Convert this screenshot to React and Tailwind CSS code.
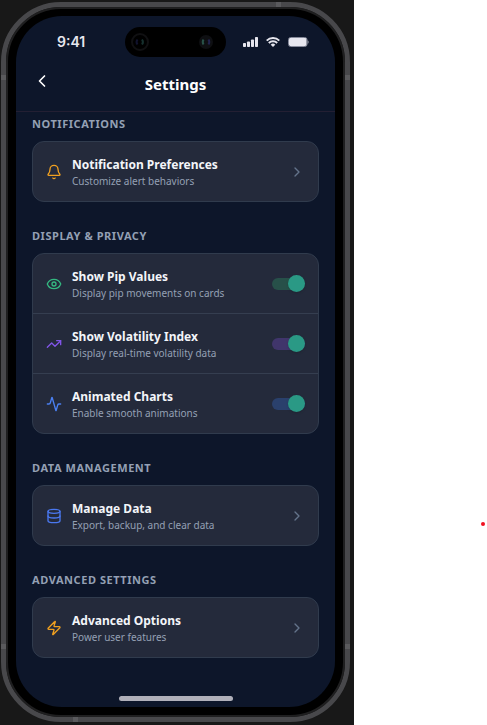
import React, { useState } from "react";
import {
  Activity,
  Bell,
  ChevronLeft,
  ChevronRight,
  Database,
  Eye,
  TrendingUp,
  Zap,
} from "lucide-react";

const TOGGLES = [
  {
    id: "pipValues",
    icon: Eye,
    iconColor: "text-[#34b981]",
    track: "bg-[#275049]",
    title: "Show Pip Values",
    text: "Display pip movements on cards",
  },
  {
    id: "volatility",
    icon: TrendingUp,
    iconColor: "text-[#8155e8]",
    track: "bg-[#40356b]",
    title: "Show Volatility Index",
    text: "Display real-time volatility data",
  },
  {
    id: "charts",
    icon: Activity,
    iconColor: "text-[#4a7ff0]",
    track: "bg-[#2a406c]",
    title: "Animated Charts",
    text: "Enable smooth animations",
  },
];

const StatusBar = () => (
  <div className="grid grid-cols-[1fr_101px_1fr] items-center pt-[11px]">
    <span className="pl-[41px] font-['Inter',sans-serif] text-sm font-semibold text-[#e6e6ee]">
      9:41
    </span>
    <div className="flex h-[30px] items-center justify-between rounded-full bg-black pl-[6px] pr-[13px]">
      <svg width="18" height="18" viewBox="0 0 18 18" fill="none">
        <circle cx="9" cy="9" r="8" stroke="#101012" strokeWidth="2" />
        <path d="M6.5 6.5c-1.2 1.6-1.2 3.4 0 5" stroke="#10122c" strokeWidth="2" />
        <path d="M11 6.5c1.2 1.6 1.2 3.4 0 5" stroke="#16302e" strokeWidth="2" />
      </svg>
      <svg width="14" height="14" viewBox="0 0 14 14" fill="none">
        <circle cx="7" cy="7" r="7" fill="#0e0f12" />
        <path d="M4.5 4.5c-1 1.6-1 3.4 0 5" stroke="#285148" strokeWidth="2" />
        <path d="M9.5 4.5c1 1.6 1 3.4 0 5" stroke="#20224c" strokeWidth="2" />
      </svg>
    </div>
    <div className="flex items-center justify-end gap-2 pr-[26px] text-[#e6e6ee]">
      <svg width="15" height="10" viewBox="0 0 15 10" fill="currentColor">
        <rect x="0" y="6" width="3" height="4" rx="0.8" />
        <rect x="4" y="4.4" width="3" height="5.6" rx="0.8" />
        <rect x="8" y="2.4" width="3" height="7.6" rx="0.8" />
        <rect x="12" y="0" width="3" height="10" rx="0.8" />
      </svg>
      <svg width="14" height="10" viewBox="0 0 14 10" fill="none" stroke="currentColor" strokeWidth="1.9">
        <path d="M0.7 3.6a9 9 0 0 1 12.6 0" />
        <path d="M2.8 6a5.9 5.9 0 0 1 8.4 0" />
        <path d="M4.7 7.7a3.3 3.3 0 0 1 4.6 0L7 10z" fill="currentColor" stroke="none" />
      </svg>
      <svg width="21" height="10" viewBox="0 0 21 10" fill="none">
        <rect x="0.5" y="0.5" width="18.5" height="9" rx="2.2" stroke="#85899a" />
        <rect x="1" y="1" width="17.5" height="8" rx="1.4" fill="currentColor" />
        <path d="M19.6 3.2c1.4.5 1.4 3.1 0 3.6z" fill="#a0a3b0" />
      </svg>
    </div>
  </div>
);

const Section = ({ title, children }) => (
  <section>
    <h2 className="mb-2 text-[11px] leading-[19px] font-bold tracking-wider text-[#94a0b4] uppercase">
      {title}
    </h2>
    <div className="divide-y divide-[#353e50] overflow-hidden rounded-xl border border-[#303b4d] bg-[#242a3b]">
      {children}
    </div>
  </section>
);

const RowText = ({ title, text }) => (
  <span className="flex min-w-0 flex-1 flex-col">
    <span className="text-xs leading-[19px] font-bold text-[#f3f5f9]">{title}</span>
    <span className="text-[10px] leading-[14px] text-[#94a0b4]">{text}</span>
  </span>
);

const LinkRow = ({ icon: Icon, iconColor, title, text }) => (
  <button
    type="button"
    className="flex min-h-[59px] w-full cursor-pointer items-center gap-[10px] px-[13px] text-left"
  >
    <Icon size={16} className={iconColor} aria-hidden="true" />
    <RowText title={title} text={text} />
    <ChevronRight size={16} className="text-[#64748b]" aria-hidden="true" />
  </button>
);

const ToggleRow = ({ icon: Icon, iconColor, track, title, text, checked, onChange }) => (
  <label className="flex min-h-[60px] cursor-pointer items-center gap-[10px] px-[13px] last:min-h-[59px]">
    <Icon size={16} className={iconColor} aria-hidden="true" />
    <RowText title={title} text={text} />
    <input
      type="checkbox"
      role="switch"
      checked={checked}
      onChange={onChange}
      className={`flex h-3 w-[33px] shrink-0 cursor-pointer appearance-none items-center rounded-full before:size-[17px] before:shrink-0 before:rounded-full before:shadow before:content-[''] checked:justify-end ${
        checked ? `${track} before:bg-[#2a9985]` : "bg-slate-600 before:bg-slate-300"
      }`}
    />
  </label>
);

const App = () => {
  const [settings, setSettings] = useState({
    pipValues: true,
    volatility: true,
    charts: true,
  });

  const toggle = (id) => setSettings((prev) => ({ ...prev, [id]: !prev[id] }));

  return (
    <div className="relative flex min-h-screen bg-white font-['Noto_Sans','Open_Sans',sans-serif]">
      <div className="flex w-full max-w-[354px] flex-col bg-[#181818] pt-[2px] pr-1 pb-[3px] pl-px">
        {/* Phone body */}
        <div className="relative flex flex-1 flex-col rounded-[60px] border-5 border-[#48484b]">
          {/* Antenna bands */}
          <span className="absolute -top-[5px] right-16 h-[5px] w-[5px] bg-[#5a5a5d]" />
          <span className="absolute -bottom-[5px] left-[67px] h-[5px] w-[5px] bg-[#5a5a5d]" />
          <span className="absolute top-[68px] -left-[5px] h-[5px] w-[5px] bg-[#5a5a5d]" />
          <span className="absolute top-[68px] -right-[5px] h-[5px] w-[5px] bg-[#5a5a5d]" />
          <span className="absolute bottom-[68px] -left-[5px] h-[5px] w-[5px] bg-[#5a5a5d]" />
          <span className="absolute -right-[5px] bottom-[68px] h-[5px] w-[5px] bg-[#5a5a5d]" />

          <div className="flex flex-1 flex-col rounded-[55px] border-2 border-[#1f1f20] bg-black px-2 pt-[7px] pb-2">
            <div className="flex flex-1 flex-col overflow-hidden rounded-[46px] bg-[#0d162a]">
              <StatusBar />

              <header className="grid grid-cols-[1fr_auto_1fr] items-center border-b border-[#231f33] pt-3 pb-[13px]">
                <button
                  type="button"
                  aria-label="Back"
                  className="ml-4 flex h-[29px] w-5 cursor-pointer items-start pt-[2px] text-white"
                >
                  <ChevronLeft size={20} aria-hidden="true" />
                </button>
                <h1 className="text-[15px] leading-6 font-bold text-white">Settings</h1>
              </header>

              <main className="flex flex-1 flex-col gap-6 px-4 pt-[2px]">
                <Section title="Notifications">
                  <LinkRow
                    icon={Bell}
                    iconColor="text-[#f0a020]"
                    title="Notification Preferences"
                    text="Customize alert behaviors"
                  />
                </Section>

                <Section title="Display & Privacy">
                  {TOGGLES.map((item) => (
                    <ToggleRow
                      key={item.id}
                      {...item}
                      checked={settings[item.id]}
                      onChange={() => toggle(item.id)}
                    />
                  ))}
                </Section>

                <Section title="Data Management">
                  <LinkRow
                    icon={Database}
                    iconColor="text-[#4a78f0]"
                    title="Manage Data"
                    text="Export, backup, and clear data"
                  />
                </Section>

                <Section title="Advanced Settings">
                  <LinkRow
                    icon={Zap}
                    iconColor="text-[#f0a020]"
                    title="Advanced Options"
                    text="Power user features"
                  />
                </Section>
              </main>

              <div className="mx-auto mb-[6px] h-[5px] w-[114px] rounded-full bg-[#b0b0ba]" />
            </div>
          </div>
        </div>
      </div>

      <span className="absolute right-[2px] bottom-[199px] size-1 rounded-full bg-[#f01020]" />
    </div>
  );
};

export default App;
